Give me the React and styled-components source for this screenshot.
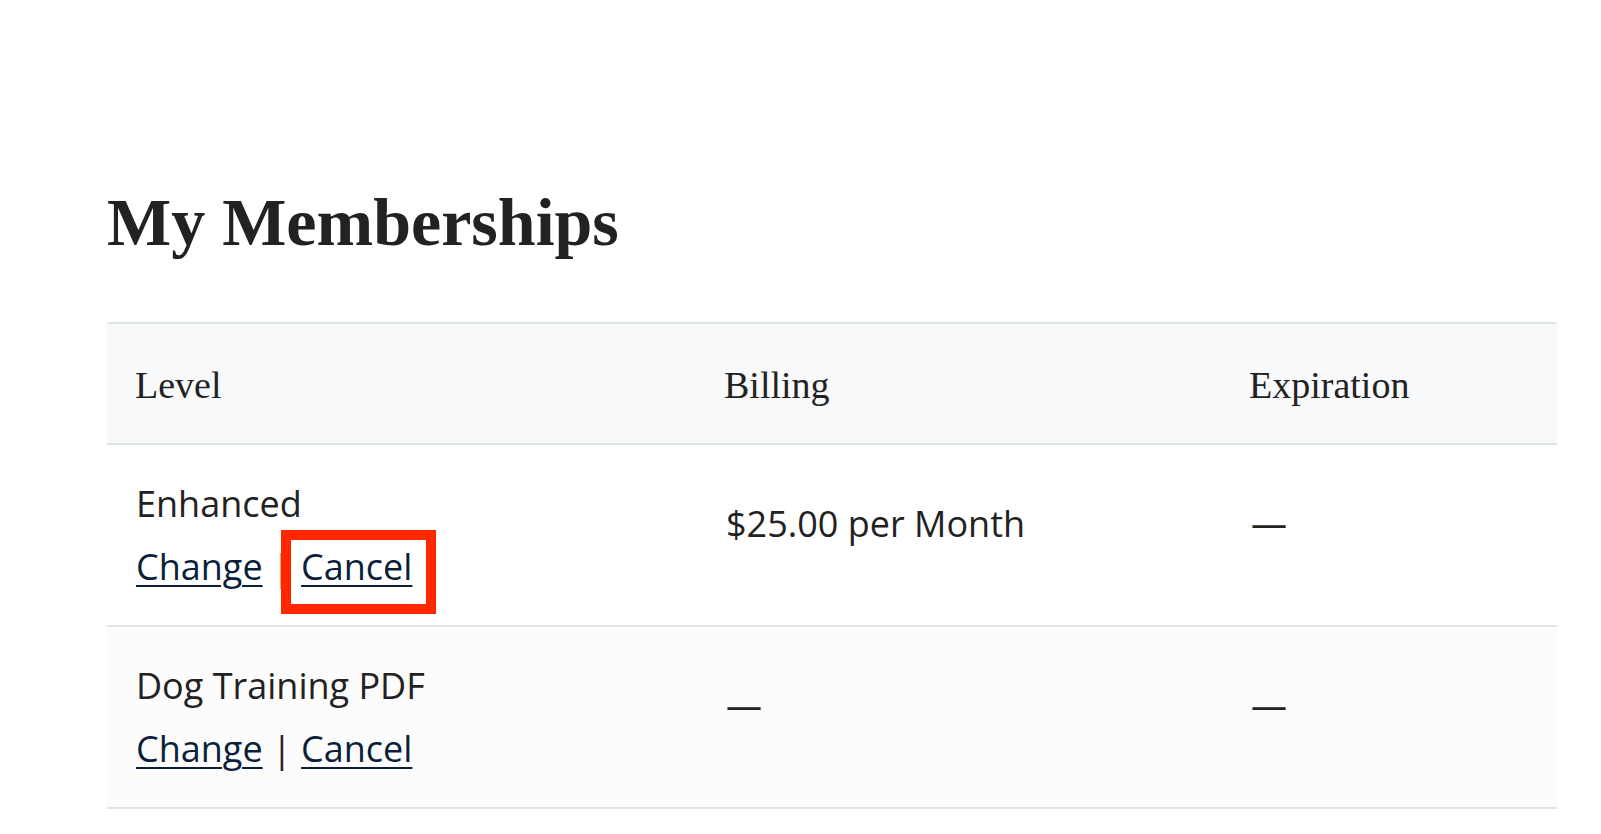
import React from 'react';
import styled, { createGlobalStyle } from 'styled-components';

const GlobalStyle = createGlobalStyle`
  body {
    margin: 0;
    background: #ffffff;
    font-family: "Open Sans", "Liberation Sans", sans-serif;
    color: #222222;
  }
`;

const memberships = [
  { level: 'Enhanced', billing: '$25.00 per Month', expiration: '—', flagged: true },
  { level: 'Dog Training PDF', billing: '—', expiration: '—', flagged: false },
];

function App() {
  return (
    <>
      <GlobalStyle />
      <Page>
        <Title>My Memberships</Title>
        <Table>
          <HeadRow>
            <HeadCell>Level</HeadCell>
            <HeadCell>Billing</HeadCell>
            <HeadCell>Expiration</HeadCell>
          </HeadRow>
          {memberships.map((m, i) => (
            <Row key={m.level} $shaded={i % 2 === 1}>
              <LevelCell>
                <div>{m.level}</div>
                <Actions>
                  <ActionLink href="#">Change</ActionLink>
                  {' | '}
                  <ActionLink href="#" $flagged={m.flagged}>Cancel</ActionLink>
                </Actions>
              </LevelCell>
              <Cell>{m.billing}</Cell>
              <Cell>{m.expiration}</Cell>
            </Row>
          ))}
        </Table>
      </Page>
    </>
  );
}

const Page = styled.div`
  padding: 182px 44px 0 107px;
`;

const Title = styled.h1`
  margin: 0 0 60px;
  font-family: "Liberation Serif", "DejaVu Serif", serif;
  font-weight: 700;
  font-size: 68px;
  line-height: 80px;
  color: #222222;
`;

const Table = styled.div`
  border-top: 2px solid #dfe5e5;
`;

const grid = `
  display: grid;
  grid-template-columns: 591px 525px 1fr;
  border-bottom: 2px solid #dfe5e5;
`;

const HeadRow = styled.div`
  ${grid}
  background: #f8f9fa;
`;

const HeadCell = styled.div`
  padding: 33px 28px 28px 28px;
  font-family: "Liberation Serif", "DejaVu Serif", serif;
  font-size: 38px;
  line-height: 57.6px;
  color: #222222;

  & + & {
    padding-left: 26px;
  }
`;

const Row = styled.div`
  ${grid}
  background: ${p => (p.$shaded ? '#fcfcfc' : '#ffffff')};
`;

const Cell = styled.div`
  padding: 50px 28px 29px 28px;
  font-size: 36px;
  line-height: 57.6px;
  color: #222222;
`;

const LevelCell = styled(Cell)`
  padding-top: 30px;
  padding-left: 29px;
`;

const Actions = styled.div`
  margin-top: 6px;
  white-space: nowrap;
`;

const ActionLink = styled.a`
  position: relative;
  color: #0b1f3b;
  text-decoration: underline;
  text-decoration-thickness: 2px;
  text-underline-offset: 5px;

  ${p => p.$flagged && `
    &::after {
      content: '';
      position: absolute;
      left: -20px;
      right: -24px;
      top: -12px;
      bottom: -23px;
      border: 10px solid #ff2600;
      pointer-events: none;
    }
  `}
`;

export default App;
